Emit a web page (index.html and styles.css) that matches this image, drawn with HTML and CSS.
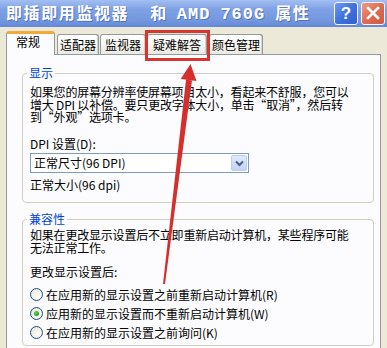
FILE: index.html
```html
<!DOCTYPE html>
<html lang="zh-CN">
<head>
<meta charset="utf-8">
<title>即插即用监视器 和 AMD 760G 属性</title>
<link rel="stylesheet" href="styles.css">
</head>
<body>
<div class="window">
  <div class="titlebar">
    <div class="title"><span class="tw">即插即用监视器</span><span class="tw gap2">和</span><span class="tw lat">AMD</span><span class="tw lat">760G</span><span class="tw">属性</span></div>
    <div class="caption-btns">
      <div class="cbtn help">?</div>
      <div class="cbtn close">
        <svg width="14" height="14" viewBox="0 0 14 14"><path d="M2 2 L12 12 M12 2 L2 12" stroke="#fff" stroke-width="2.6" stroke-linecap="square"/></svg>
      </div>
    </div>
  </div>
  <div class="body">
    <div class="tabs">
      <div class="tab active t1">常规</div>
      <div class="tab t2">适配器</div>
      <div class="tab t3">监视器</div>
      <div class="tab t4">疑难解答</div>
      <div class="tab t5">颜色管理</div>
    </div>
    <div class="panel">
      <fieldset class="group g1">
        <legend>显示</legend>
        <p class="desc">如果您的屏幕分辨率使屏幕项目太小，看起来不舒服，您可以<br>增大 DPI 以补偿。要只更改字体大小，单击“取消”，然后转<br>到“外观”选项卡。</p>
        <div class="label dpi-label">DPI 设置(D):</div>
        <div class="select">
          <span class="select-text">正常尺寸(96 DPI)</span>
          <span class="select-btn"><svg width="9" height="7" viewBox="0 0 9 7"><path d="M1 1.5 L4.5 5 L8 1.5" fill="none" stroke="#4d6185" stroke-width="2"/></svg></span>
        </div>
        <div class="label normal">正常大小(96 dpi)</div>
      </fieldset>
      <fieldset class="group g2">
        <legend>兼容性</legend>
        <p class="desc">如果在更改显示设置后不立即重新启动计算机，某些程序可能<br>无法正常工作。</p>
        <div class="label after">更改显示设置后:</div>
        <div class="radios">
          <div class="radio"><span class="dot"></span><span>在应用新的显示设置之前重新启动计算机(R)</span></div>
          <div class="radio"><span class="dot checked"></span><span>应用新的显示设置而不重新启动计算机(W)</span></div>
          <div class="radio"><span class="dot"></span><span>在应用新的显示设置之前询问(K)</span></div>
        </div>
      </fieldset>
    </div>
  </div>
  <div class="highlight"></div>
  <svg class="arrow" width="387" height="348" viewBox="0 0 387 348">
    <polygon points="186,79.6 192,80.4 165,284.1 163,283.9" fill="#d42f2c"/>
    <polygon points="190.5,64 196.5,81 180.7,79" fill="#d42f2c"/>
  </svg>
</div>
</body>
</html>
```

FILE: styles.css
```css
html, body {
  margin: 0;
  padding: 0;
}
body {
  width: 387px;
  height: 348px;
  overflow: hidden;
  background: #ece9d8;
  font-family: "Noto Sans CJK SC", "Noto Sans", sans-serif;
  font-size: 12px;
  color: #000;
}
.window {
  position: relative;
  width: 387px;
  height: 348px;
  overflow: hidden;
}
.titlebar {
  height: 27px;
  display: flex;
  align-items: center;
  justify-content: space-between;
  background: linear-gradient(#a3bff2 0%, #7fa1e4 35%, #7497de 75%, #6389d6 100%);
  padding: 0 2px 1px 6px;
  box-sizing: border-box;
}
.title {
  display: flex;
  align-items: baseline;
  font-family: "Noto Sans CJK SC", sans-serif;
  font-size: 16px;
  font-weight: bold;
  color: #fff;
  white-space: nowrap;
  line-height: 20px;
  text-shadow: 1px 1px 0 rgba(40, 70, 150, 0.45);
}
.tw {
  letter-spacing: 1.6px;
  margin-right: 9px;
}
.tw:first-child {
  margin-right: 21px;
}
.tw.lat {
  font-family: "Liberation Mono", monospace;
  font-size: 17px;
  letter-spacing: 1px;
  margin-right: 10px;
}
.tw:last-child {
  margin-right: 0;
}
.caption-btns {
  display: flex;
  gap: 3px;
}
.cbtn {
  width: 24px;
  height: 23px;
  box-sizing: border-box;
  border: 1px solid #f4f6fc;
  border-radius: 3px;
  display: flex;
  align-items: center;
  justify-content: center;
}
.help {
  background: linear-gradient(135deg, #6f9bf0 0%, #3f72dc 50%, #2f61d0 100%);
  color: #fff;
  font-family: "Liberation Sans", sans-serif;
  font-weight: bold;
  font-size: 17px;
  line-height: 1;
}
.close {
  background: linear-gradient(135deg, #ee9a80 0%, #dd6d52 50%, #cf5a40 100%);
}
.body {
  padding-top: 4px;
}
.tabs {
  display: flex;
  align-items: flex-end;
  height: 24px;
  padding-left: 6px;
}
.tab {
  box-sizing: border-box;
  height: 20px;
  margin-bottom: 1px;
  border: 1px solid #919b9c;
  border-bottom: none;
  border-radius: 3px 3px 0 0;
  background: linear-gradient(#ffffff 0%, #f7f7f3 50%, #e9e8e2 100%);
  box-shadow: inset -1px 0 0 #d6d4c8;
  line-height: 19px;
  text-align: center;
  white-space: nowrap;
}
.tab.active {
  position: relative;
  z-index: 2;
  height: 24px;
  margin-bottom: 0;
  background: #fcfcfe;
  border-top: 3px solid #f2a93a;
  box-shadow: none;
  text-align: left;
  padding-left: 9px;
  line-height: 16px;
}
.t1 { width: 49px; }
.t2 { width: 42px; margin-left: 2px; }
.t3 { width: 46px; margin-left: 1px; }
.t4 { width: 60px; margin-left: 1px; }
.t5 { width: 54px; margin-left: 2px; }
.panel {
  position: relative;
  z-index: 1;
  margin: -1px 0 0 6px;
  width: 375px;
  height: 300px;
  box-sizing: border-box;
  border: 1px solid #919b9c;
  background: #fcfcfe;
  padding: 11px 6px 0 15px;
}
.group {
  margin: 0;
  min-inline-size: 0;
  border: 1px solid #d0d0bf;
  border-radius: 4px;
  padding: 0 6px 10px 7px;
}
.group legend {
  color: #0046d5;
  padding: 0 2px;
  margin-left: -3px;
  line-height: 14px;
  font-size: 12px;
}
.desc {
  margin: 6px 0 0;
  line-height: 12.5px;
  letter-spacing: -0.2px;
  white-space: nowrap;
}
.label {
  line-height: 14px;
  white-space: nowrap;
}
.dpi-label {
  margin-top: 13.5px;
}
.select {
  margin-top: 2px;
  width: 219px;
  height: 20px;
  box-sizing: border-box;
  border: 1px solid #7f9db9;
  background: #fff;
  display: flex;
  align-items: center;
  justify-content: space-between;
  padding: 0 1px 0 3px;
}
.select-text {
  line-height: 16px;
}
.select-btn {
  width: 16px;
  height: 16px;
  box-sizing: border-box;
  border: 1px solid #bccdf3;
  border-radius: 2px;
  background: linear-gradient(#dfe8fd, #c2d3f9);
  display: flex;
  align-items: center;
  justify-content: center;
}
.normal {
  margin-top: 5px;
}
.g2 {
  margin-top: 9px;
  padding-bottom: 3px;
}
.g2 .desc {
  margin-top: 3px;
}
.after {
  margin-top: 11px;
}
.radios {
  margin-top: 5.5px;
}
.radio {
  height: 19px;
  display: flex;
  align-items: center;
  white-space: nowrap;
}
.dot {
  width: 13px;
  height: 13px;
  box-sizing: border-box;
  border: 1px solid #1c5180;
  border-radius: 50%;
  background: radial-gradient(circle at 65% 65%, #ffffff 0%, #f1efe5 55%, #dcd9cd 100%);
  margin: 0 3px 0 0;
  flex: none;
  display: flex;
  align-items: center;
  justify-content: center;
}
.dot.checked::after {
  content: "";
  width: 5px;
  height: 5px;
  border-radius: 50%;
  background: radial-gradient(circle at 40% 35%, #62d262 0%, #21a121 70%, #158015 100%);
}
.highlight {
  position: absolute;
  left: 145px;
  top: 30px;
  width: 65px;
  height: 31px;
  box-sizing: border-box;
  border: 3px solid #d83430;
  z-index: 5;
}
.arrow {
  position: absolute;
  left: 0;
  top: 0;
  z-index: 6;
  pointer-events: none;
}
```
